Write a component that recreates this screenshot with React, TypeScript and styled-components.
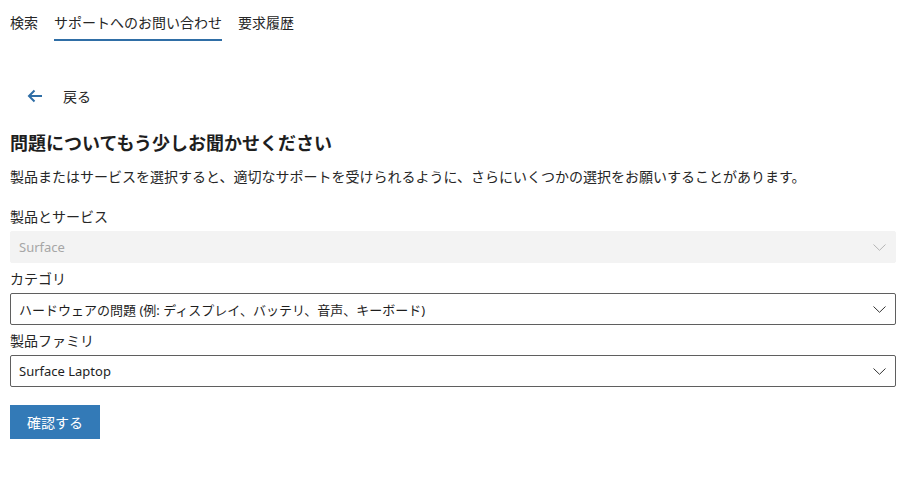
import React from 'react'
import styled, { createGlobalStyle } from 'styled-components'

const GlobalStyle = createGlobalStyle`
    body {
        margin: 0;
        background: #ffffff;
        font-family: "Segoe UI", "Noto Sans", "Noto Sans CJK JP", sans-serif;
        color: #262626;
    }
`

const Page = styled.div`
    display: flex;
    flex-direction: column;
    padding: 0 12px 0 10px;
`

const TabBar = styled.nav`
    display: flex;
    gap: 16px;
`

const Tab = styled.div<{ $active?: boolean }>`
    padding: 13px 0 6px;
    font-size: 14px;
    line-height: 20px;
    color: #262626;
    border-bottom: 2px solid ${(p) => (p.$active ? '#2f6ea6' : 'transparent')};
`

const BackLink = styled.div`
    display: flex;
    align-items: center;
    gap: 20px;
    height: 32px;
    margin-top: 39px;
    padding-left: 17px;
    font-size: 14px;
    color: #262626;
`

const Heading = styled.h1`
    margin: 19px 0 0;
    font-size: 18px;
    line-height: 24px;
    font-weight: 700;
    color: #1e1e1e;
`

const Description = styled.p`
    margin: 12px 0 0;
    font-size: 14px;
    line-height: 20px;
`

const Form = styled.div`
    display: flex;
    flex-direction: column;
    margin-top: 20px;
`

const Field = styled.div`
    display: flex;
    flex-direction: column;
    gap: 4px;
    margin-bottom: 6px;
`

const Label = styled.label`
    font-size: 14px;
    line-height: 20px;
    color: #262626;
`

const Select = styled.div<{ $disabled?: boolean }>`
    display: flex;
    align-items: center;
    justify-content: space-between;
    box-sizing: border-box;
    height: 32px;
    padding: 0 8px;
    border-radius: 2px;
    font-size: 13px;
    background: ${(p) => (p.$disabled ? '#f3f3f3' : '#ffffff')};
    border: 1px solid ${(p) => (p.$disabled ? '#f3f3f3' : '#5f5f5f')};
    color: ${(p) => (p.$disabled ? '#a6a6a6' : '#1e1e1e')};
`

const Chevron = styled.svg<{ $muted?: boolean }>`
    width: 13px;
    height: 7px;
    margin-right: 1px;
    stroke: ${(p) => (p.$muted ? '#b5b5b5' : '#333333')};
`

const SubmitButton = styled.button`
    align-self: flex-start;
    width: 90px;
    height: 34px;
    margin-top: 12px;
    border: none;
    border-radius: 0;
    background: #337ab7;
    color: #ffffff;
    font-family: inherit;
    font-size: 14px;
`

const ChevronDown = ({ muted }: { muted?: boolean }) => (
    <Chevron $muted={muted} viewBox="0 0 13 7" fill="none" strokeWidth="1">
        <path d="M0.5 0.5 L6.5 6.3 L12.5 0.5" />
    </Chevron>
)

interface SelectProps {
    label: string
    value: string
    disabled?: boolean
}

const SelectField = ({ label, value, disabled }: SelectProps) => (
    <Field>
        <Label>{label}</Label>
        <Select $disabled={disabled}>
            <span>{value}</span>
            <ChevronDown muted={disabled} />
        </Select>
    </Field>
)

const App = () => {
    return (
        <>
            <GlobalStyle />
            <Page>
                <TabBar>
                    <Tab>検索</Tab>
                    <Tab $active>サポートへのお問い合わせ</Tab>
                    <Tab>要求履歴</Tab>
                </TabBar>
                <BackLink>
                    <svg width="16" height="14" viewBox="0 0 16 14" fill="none" stroke="#2f6ea6" strokeWidth="2">
                        <path d="M15 7 H2 M7.5 1.5 L2 7 L7.5 12.5" />
                    </svg>
                    <span>戻る</span>
                </BackLink>
                <Heading>問題についてもう少しお聞かせください</Heading>
                <Description>
                    製品またはサービスを選択すると、適切なサポートを受けられるように、さらにいくつかの選択をお願いすることがあります。
                </Description>
                <Form>
                    <SelectField label="製品とサービス" value="Surface" disabled />
                    <SelectField label="カテゴリ" value="ハードウェアの問題 (例: ディスプレイ、バッテリ、音声、キーボード)" />
                    <SelectField label="製品ファミリ" value="Surface Laptop" />
                    <SubmitButton>確認する</SubmitButton>
                </Form>
            </Page>
        </>
    )
}

export default App
